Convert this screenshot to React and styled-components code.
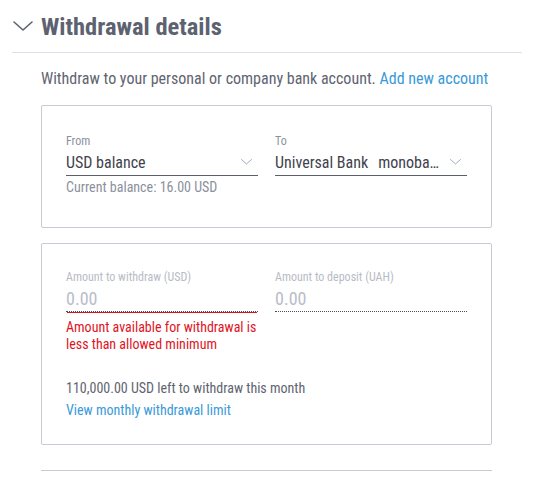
import React from 'react';
import styled, { createGlobalStyle } from 'styled-components';

const GlobalStyle = createGlobalStyle`
  html, body {
    margin: 0;
    padding: 0;
    background: #ffffff;
  }
  body {
    font-family: "Roboto Condensed", Roboto, "Liberation Sans", sans-serif;
    color: #5f6470;
  }
`;

const Chevron = ({ size = 20, color = '#5d6270', width = 1.6 }) => (
  <svg width={size} height={size / 2} viewBox="0 0 20 10" fill="none">
    <path d="M1 1 L10 9 L19 1" stroke={color} strokeWidth={width} strokeLinecap="round" strokeLinejoin="round" />
  </svg>
);

const App = () => {
  return (
    <>
      <GlobalStyle />
      <Section>
        <Header>
          <Chevron />
          <Title>Withdrawal details</Title>
        </Header>
        <Body>
          <Intro>
            Withdraw to your personal or company bank account. <Link href="#">Add new account</Link>
          </Intro>

          <Card $pad="27px 24px 32px">
            <Columns>
              <Field>
                <Label>From</Label>
                <Select>
                  <SelectText>USD balance</SelectText>
                  <Chevron size={11} color="#9aa0ad" width={1.6} />
                </Select>
                <Hint>Current balance: 16.00 USD</Hint>
              </Field>
              <Field>
                <Label>To</Label>
                <Select>
                  <SelectText>
                    Universal Bank<Extra>monobank</Extra>
                  </SelectText>
                  <Chevron size={11} color="#9aa0ad" width={1.6} />
                </Select>
              </Field>
            </Columns>
          </Card>

          <Card $pad="25px 24px 24px">
            <Columns>
              <Field>
                <Label $muted>Amount to withdraw (USD)</Label>
                <Amount $error>0.00</Amount>
                <Error>Amount available for withdrawal is less than allowed minimum</Error>
              </Field>
              <Field>
                <Label $muted>Amount to deposit (UAH)</Label>
                <Amount>0.00</Amount>
              </Field>
            </Columns>
            <Limit>110,000.00 USD left to withdraw this month</Limit>
            <Link href="#">View monthly withdrawal limit</Link>
          </Card>

          <Rule />
        </Body>
      </Section>
    </>
  );
};

const Section = styled.section`
  padding: 12px 12px 0 12px;
  width: 510px;
`;

const Header = styled.div`
  display: flex;
  align-items: center;
  gap: 8px;
  height: 28px;
  padding: 0 0 12px 1px;
  border-bottom: 1px solid #dbe1ea;
`;

const Title = styled.h2`
  margin: 0;
  font-size: 24.5px;
  font-weight: 700;
  color: #5d6270;
`;

const Body = styled.div`
  padding: 16px 30px 0 29px;
  display: flex;
  flex-direction: column;
`;

const Intro = styled.p`
  margin: 0 0 16px;
  font-size: 16px;
  line-height: 20px;
  color: #5f6470;
`;

const Link = styled.a`
  color: #3a9ad9;
  text-decoration: none;
  font-size: inherit;
  line-height: 20px;
`;

const Card = styled.div`
  border: 1px solid #c8cbd3;
  border-radius: 2px;
  padding: ${(p) => p.$pad};
  margin-bottom: 15px;
  display: flex;
  flex-direction: column;
  align-items: flex-start;
  font-size: 14px;
`;

const Columns = styled.div`
  display: grid;
  grid-template-columns: 1fr 1fr;
  column-gap: 17px;
  width: 100%;
`;

const Field = styled.div`
  display: flex;
  flex-direction: column;
  min-width: 0;
`;

const Label = styled.div`
  font-size: 12px;
  line-height: 16px;
  color: ${(p) => (p.$muted ? '#b7bbc6' : '#8b909c')};
`;

const Select = styled.div`
  display: flex;
  align-items: center;
  gap: 9px;
  height: 26px;
  padding-right: 6px;
  border-bottom: 1px solid #5b606c;
`;

const SelectText = styled.div`
  flex: 1;
  min-width: 0;
  font-size: 16px;
  color: #3f434d;
  white-space: nowrap;
  overflow: hidden;
  text-overflow: ellipsis;
`;

const Extra = styled.span`
  margin-left: 10px;
`;

const Hint = styled.div`
  margin-top: 3px;
  font-size: 14px;
  line-height: 16px;
  color: #8b909c;
`;

const Amount = styled.div`
  font-size: 18px;
  line-height: 26px;
  height: 25px;
  color: #b9bdc8;
  border-bottom: 1px dotted #4a4e58;
  box-shadow: ${(p) => (p.$error ? '0 2px 0 -1px #d9141f' : 'none')};
  margin-top: 1px;
`;

const Error = styled.div`
  margin-top: 7px;
  font-size: 14px;
  line-height: 17px;
  color: #e0141e;
`;

const Limit = styled.div`
  margin-top: 25px;
  margin-bottom: 2px;
  font-size: 14px;
  line-height: 20px;
  color: #5f6470;
`;

const Rule = styled.div`
  height: 1px;
  background: #c8cbd3;
  margin-top: 10px;
`;

export default App;
